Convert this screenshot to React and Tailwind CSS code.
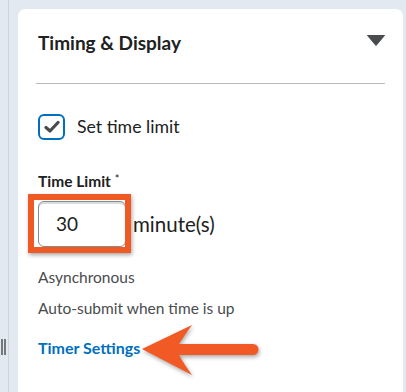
export default function App() {
  return (
    <div className="relative w-[406px] h-[392px] overflow-hidden bg-[#e3e9f1] flex font-['Lato','Noto_Sans',sans-serif]">
      {/* left rail */}
      <div className="flex shrink-0">
        <div className="w-[8px] pt-[339px] flex gap-[1px] pl-[1px]">
          <div className="w-[2px] h-[16px] bg-[#74797c]" />
          <div className="w-[2px] h-[16px] bg-[#74797c]" />
        </div>
        <div className="w-px bg-[#cdd5df]" />
        <div className="w-[9px]" />
      </div>

      {/* card */}
      <div className="mt-[9px] w-[385px] shrink-0 bg-white rounded-t-[7px] pl-[20px] pr-[18px] pt-[23px]">
        <div className="flex items-start justify-between">
          <h2 className="text-[19px] leading-[1.2] font-bold text-[#202122]">Timing &amp; Display</h2>
          <svg width="18" height="11" viewBox="0 0 18 11" className="mt-[3px]">
            <path d="M0.5 0.5 H17.5 L9 10.5 Z" fill="#494c4e" stroke="#494c4e" strokeLinejoin="round" />
          </svg>
        </div>

        <div className="mt-[28px] -ml-[2px] h-px bg-[#b5babe]" />

        <label className="mt-[30px] flex items-center gap-[12px]">
          <span className="w-[27px] h-[26px] border-2 border-[#006fbf] rounded-[6px] flex items-center justify-center">
            <svg width="16" height="14" viewBox="0 0 16 14">
              <path d="M2 7.5 L6 11 L14 2.5" fill="none" stroke="#494c4e" strokeWidth="3.2" strokeLinecap="round" strokeLinejoin="round" />
            </svg>
          </span>
          <span className="text-[17.7px] leading-[1.2] text-[#202122]">Set time limit</span>
        </label>

        <div className="mt-[32px] text-[15.5px] leading-[1.2] font-bold text-[#202122]">
          Time Limit <span className="text-[11px] align-top font-normal">*</span>
        </div>

        <div className="mt-[11px] flex items-center">
          <div className="relative">
            <div className="w-[88px] h-[46px] border border-[#868c8f] rounded-[6px] shadow-[inset_0_2px_0_0_rgba(180,185,190,0.5)] flex items-center pl-[17px] text-[19px] text-[#202122]">
              30
            </div>
            <div className="absolute -left-[10px] -top-[7px] w-[103px] h-[59px] border-[6px] border-[#ef5a24] shadow-[1px_2px_4px_rgba(0,0,0,0.35)]" />
          </div>
          <span className="ml-[7px] text-[20.5px] text-[#202122]">minute(s)</span>
        </div>

        <div className="mt-[15px] text-[15.5px] leading-[31px] text-[#494c4e]">
          <div>Asynchronous</div>
          <div>Auto-submit when time is up</div>
        </div>

        <a className="block mt-[14px] text-[16px] leading-[1.2] font-bold text-[#006fbf]">Timer Settings</a>
      </div>

      {/* annotation arrow */}
      <svg
        className="absolute left-[138px] top-[320px] drop-shadow-[1px_2px_2px_rgba(0,0,0,0.35)]"
        width="126"
        height="60"
        viewBox="0 0 126 60"
      >
        <path
          d="M4 29 L54 5 Q46 16 41 24 L115 24 A5.5 5.5 0 0 1 115 35 L41 35 Q46 44 54 55 Z"
          fill="#f15a24"
        />
      </svg>
    </div>
  )
}
